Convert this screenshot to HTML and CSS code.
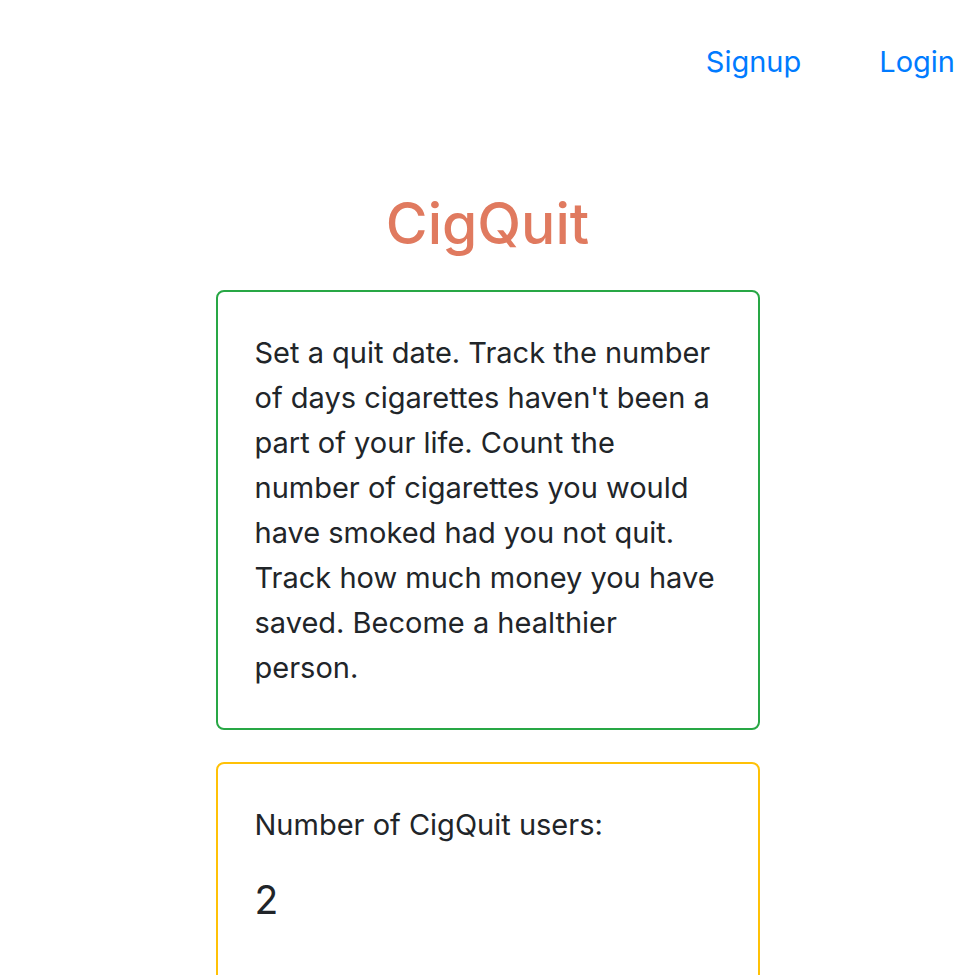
FILE: index.html
```html
<!DOCTYPE html>
<html lang="en">
<head>
<meta charset="utf-8">
<title>CigQuit</title>
<link rel="stylesheet" href="styles.css">
</head>
<body>
<nav class="topnav">
  <a class="nav-link" href="#">Signup</a>
  <a class="nav-link" href="#">Login</a>
</nav>
<main class="main">
  <h2 class="title">CigQuit</h2>
  <div class="card card-green">
    <p class="card-text">Set a quit date. Track the number of days cigarettes haven't been a part of your life. Count the number of cigarettes you would have smoked had you not quit. Track how much money you have saved. Become a healthier person.</p>
  </div>
  <div class="card card-yellow">
    <p class="card-label">Number of CigQuit users:</p>
    <h5 class="card-count">2</h5>
  </div>
</main>
</body>
</html>
```
FILE: styles.css
```css
html, body {
  margin: 0;
  padding: 0;
  background: #fff;
}
body {
  font-family: Inter, "Noto Sans", sans-serif;
  font-size: 29px;
  line-height: 1.5;
  color: #212529;
}
.topnav {
  display: flex;
  justify-content: flex-end;
  gap: 78px;
  padding: 39px 20px 0 0;
}
.nav-link {
  color: #007bff;
  text-decoration: none;
  line-height: 45px;
}
.main {
  width: 544px;
  margin: 0 auto;
}
.title {
  margin: 104px 0 30px;
  text-align: center;
  font-size: 57px;
  font-weight: 500;
  line-height: 72px;
  color: #e07a5f;
}
.card {
  border: 2px solid;
  border-radius: 8px;
  padding: 38px 37px;
  margin-bottom: 32px;
}
.card-green { border-color: #28a745; }
.card-yellow { border-color: #ffc107; }
.card-text, .card-label {
  margin: 0;
  line-height: 45px;
}
.card-label { margin-bottom: 30px; }
.card-count {
  margin: 0 0 40px;
  font-size: 39px;
  font-weight: 400;
  line-height: 45px;
}
```
